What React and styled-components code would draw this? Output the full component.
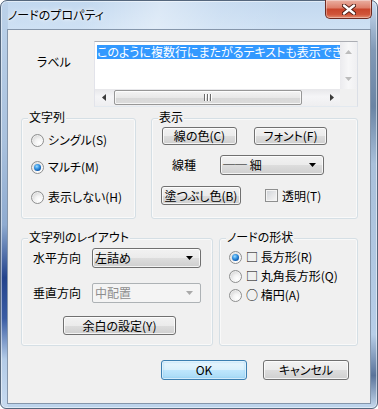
import React from 'react';
import styled, { createGlobalStyle, css } from 'styled-components';

const F = `"Noto Sans CJK JP", "Noto Sans", sans-serif`;

const GlobalStyle = createGlobalStyle`
  html, body { margin: 0; padding: 0; background: #ffffff; }
  body { font-family: ${F}; font-size: 12px; color: #000; }
  * { box-sizing: border-box; }
`;

const Window = styled.div`
  width: 378px;
  height: 409px;
  display: flex;
  flex-direction: column;
  padding: 0 6px 4px;
  border: 1px solid #55677d;
  border-radius: 7px 7px 6px 6px;
  box-shadow: inset 0 0 0 1px rgba(255, 255, 255, 0.5);
  font-feature-settings: "palt";
  background:
    linear-gradient(105deg, rgba(255,255,255,0) 22%, rgba(255,255,255,0.38) 42%, rgba(255,255,255,0.12) 58%, rgba(255,255,255,0) 75%) 0 0 / 100% 29px no-repeat,
    linear-gradient(180deg, #bcd2ea 0%, #a9c1dd 35%, #8fabd0 55%, #23438c 68%, #3a5ca3 78%, #b3cbe7 88%, #c8dbf0 100%) 0 0 / 7px 100% no-repeat,
    linear-gradient(180deg, #c9dcf1 0%, #8199b6 12%, #6a84a4 26%, #a9c0da 40%, #b7cee8 82%, #5a739a 92%, #c7daef 100%) 100% 0 / 7px 100% no-repeat,
    linear-gradient(180deg, #c2d8ef 0%, #cfe1f4 7%, #bdd4ec 100%);
`;

const TitleBar = styled.div`
  height: 28px;
  margin: 0 -6px;
  padding: 0 5px 0 7px;
  display: flex;
  align-items: flex-start;
  justify-content: space-between;
  flex: none;
`;

const Title = styled.span`
  margin-top: 7px;
  line-height: 14px;
  font-size: 12px;
  color: #000;
  text-shadow: 0 0 6px rgba(255, 255, 255, 0.9), 0 0 3px rgba(255, 255, 255, 0.9);
`;

const CloseButton = styled.div`
  width: 47px;
  height: 19px;
  margin-top: -1px;
  border: 1px solid #6e2b22;
  border-top: none;
  border-radius: 0 0 5px 5px;
  background: linear-gradient(#eab0a2 0%, #de806b 42%, #c9462c 52%, #d0553a 80%, #e38c70 100%);
  box-shadow: inset 0 0 0 1px rgba(255, 255, 255, 0.35);
  display: flex;
  align-items: center;
  justify-content: center;
`;

const Client = styled.div`
  flex: 1;
  border: 1px solid #8596ab;
  background: #f0f0f0;
  display: flex;
  flex-direction: column;
`;

const LabelRow = styled.div`
  display: flex;
  align-items: flex-start;
  margin-top: 11px;
  padding-left: 29px;
`;

const FieldName = styled.span`
  width: ${p => p.$w}px;
  flex: none;
  line-height: 14px;
  margin-top: ${p => p.$mt || 0}px;
`;

const TextBox = styled.div`
  width: 264px;
  height: 66px;
  border: 1px solid;
  border-color: #abadb3 #dbdfe6 #e3e9ef #e2e3ea;
  background: #fff;
  display: grid;
  grid-template-columns: 1fr 17px;
  grid-template-rows: 1fr 17px;
`;

const TextContent = styled.div`
  grid-column: 1;
  grid-row: 1;
  overflow: hidden;
  white-space: nowrap;
  padding: 1px 0 0 2px;
`;

const Selected = styled.span`
  display: inline-block;
  background: #3399ff;
  color: #fff;
  line-height: 14px;
`;

const VScroll = styled.div`
  grid-column: 2;
  grid-row: 1;
  display: flex;
  flex-direction: column;
  justify-content: space-between;
  align-items: center;
  padding: 8px 0;
  background: linear-gradient(90deg, #ebebee, #f7f7f8 50%, #efeff1);
`;

const HScroll = styled.div`
  grid-column: 1;
  grid-row: 2;
  display: flex;
  align-items: center;
  background: linear-gradient(#e7e7ea, #f5f5f7 45%, #eeeef0);
`;

const ArrowCell = styled.div`
  width: 17px;
  height: 17px;
  flex: none;
  display: flex;
  align-items: center;
  justify-content: center;
`;

const Thumb = styled.div`
  width: 188px;
  height: 15px;
  margin-left: 2px;
  border: 1px solid #979797;
  border-radius: 2px;
  background: linear-gradient(#f4f4f4 0%, #e8e8e8 50%, #d8d8d8 51%, #dcdcdc 100%);
  box-shadow: inset 0 0 0 1px rgba(255, 255, 255, 0.7);
  display: flex;
  align-items: center;
  justify-content: center;
  gap: 1px;
`;

const Grip = styled.span`
  width: 1px;
  height: 7px;
  background: #6b6b6b;
  box-shadow: 1px 0 0 #ffffff;
  margin-right: 1px;
`;

const Spacer = styled.div`
  flex: 1;
`;

const Corner = styled.div`
  grid-column: 2;
  grid-row: 2;
  background: #f0f0f0;
`;

const GroupRow = styled.div`
  display: flex;
  align-items: stretch;
  margin-top: ${p => p.$mt}px;
  padding-left: 13px;
  gap: ${p => p.$gap}px;
  height: ${p => p.$h}px;
  flex: none;
`;

const Group = styled.div`
  position: relative;
  width: ${p => p.$w}px;
  flex: none;
  border: 1px solid #d5dfe5;
  border-radius: 3px;
  box-shadow: inset 0 0 0 1px rgba(255, 255, 255, 0.6);
  padding: ${p => p.$pad};
  display: flex;
  flex-direction: column;
  align-items: flex-start;
`;

const Legend = styled.span`
  position: absolute;
  top: -9px;
  left: 6px;
  padding: 0 1px;
  background: #f0f0f0;
  line-height: 14px;
  white-space: nowrap;
`;

const RadioItem = styled.label`
  display: flex;
  align-items: center;
  gap: 4px;
  height: 14px;
  line-height: 14px;
  margin-top: ${p => p.$mt || 0}px;
  white-space: nowrap;
`;

const RadioCircle = styled.span`
  position: relative;
  width: 13px;
  height: 13px;
  flex: none;
  border-radius: 50%;
  border: 1px solid #8e8f8f;
  background: radial-gradient(circle at 65% 70%, #ffffff 0%, #f4f4f4 35%, #d8d8d8 75%, #cbcbcb 100%);
  box-shadow: inset 0 0 0 1px rgba(255, 255, 255, 0.5);
  ${p => p.$checked && css`
    &::after {
      content: '';
      position: absolute;
      left: 2px;
      top: 2px;
      width: 7px;
      height: 7px;
      border-radius: 50%;
      background: radial-gradient(circle at 40% 35%, #9fdcff 0%, #3d9be6 35%, #0f5cb0 70%, #0b3d7e 100%);
    }
  `}
`;

const CheckItem = styled.label`
  display: flex;
  align-items: center;
  gap: 4px;
  line-height: 14px;
  white-space: nowrap;
`;

const CheckBoxBox = styled.span`
  width: 13px;
  height: 13px;
  flex: none;
  border: 1px solid #8e8f8f;
  background: linear-gradient(135deg, #cdd1d6 0%, #e4e5e7 50%, #f7f7f7 100%);
  box-shadow: inset 0 0 0 1px #f4f4f4;
`;

const ButtonLine = styled.div`
  display: flex;
  align-items: center;
  gap: ${p => p.$gap || 0}px;
  margin-top: ${p => p.$mt || 0}px;
  margin-left: ${p => p.$ml || 0}px;
`;

const FieldRow = styled.div`
  display: flex;
  align-items: center;
  margin-top: ${p => p.$mt || 0}px;
  margin-left: ${p => p.$ml || 0}px;
`;

const RadioList = styled.div`
  display: flex;
  flex-direction: column;
  align-items: flex-start;
`;

const PushButton = styled.button`
  width: ${p => p.$w}px;
  height: ${p => p.$h || 19}px;
  flex: none;
  margin: 0;
  margin-top: ${p => p.$mt || 0}px;
  margin-left: ${p => p.$ml || 0}px;
  padding: 0;
  font-family: ${F};
  font-size: 12px;
  font-feature-settings: "palt";
  line-height: 14px;
  color: #000;
  white-space: nowrap;
  border: 1px solid #707070;
  border-radius: 3px;
  background: linear-gradient(#f2f2f2 0%, #ebebeb 50%, #dddddd 51%, #cfcfcf 100%);
  box-shadow: inset 0 0 0 1px rgba(255, 255, 255, 0.75);
  ${p => p.$default && css`
    border-color: #3c7fb1;
    background: linear-gradient(#eaf6fd 0%, #d9f0fc 50%, #bee6fd 51%, #a7d9f5 100%);
    box-shadow: inset 0 0 0 1px rgba(255, 255, 255, 0.6), inset 0 0 2px 1px rgba(110, 190, 240, 0.6);
  `}
`;

const Combo = styled.div`
  width: ${p => p.$w}px;
  height: 20px;
  flex: none;
  display: flex;
  align-items: center;
  justify-content: space-between;
  padding: 0 7px 0 2px;
  line-height: 14px;
  border: 1px solid #707070;
  border-radius: 3px;
  background: linear-gradient(#f2f2f2 0%, #ebebeb 50%, #dddddd 51%, #cfcfcf 100%);
  box-shadow: inset 0 0 0 1px rgba(255, 255, 255, 0.75);
  color: #000;
  ${p => p.$disabled && css`
    border-color: #adb2b5;
    border-radius: 2px;
    background: #f4f4f4;
    box-shadow: none;
    color: #8d8d8d;
  `}
`;

const ComboArrow = ({ color }) => (
  <svg width="7" height="4" viewBox="0 0 7 4"><polygon points="0,0 7,0 3.5,4" fill={color} /></svg>
);

const ButtonRow = styled.div`
  display: flex;
  justify-content: flex-end;
  gap: 16px;
  margin-top: 14px;
  padding-right: 21px;
`;

const Tri = ({ dir, color }) => {
  const pts = {
    up: '0,4 7,4 3.5,0',
    down: '0,0 7,0 3.5,4',
    left: '4,0 4,7 0,3.5',
    right: '0,0 0,7 4,3.5',
  }[dir];
  const vert = dir === 'up' || dir === 'down';
  return (
    <svg width={vert ? 7 : 4} height={vert ? 4 : 7} viewBox={vert ? '0 0 7 4' : '0 0 4 7'}>
      <polygon points={pts} fill={color} />
    </svg>
  );
};

export default function App() {
  return (
    <>
      <GlobalStyle />
      <Window>
        <TitleBar>
          <Title>ノードのプロパティ</Title>
          <CloseButton>
            <svg width="14" height="11" viewBox="0 0 14 11">
              <path d="M2 1.5 L12 9.5 M12 1.5 L2 9.5" stroke="#4a1a12" strokeWidth="4.2" strokeLinecap="round" />
              <path d="M2 1.5 L12 9.5 M12 1.5 L2 9.5" stroke="#ffffff" strokeWidth="2.4" strokeLinecap="round" />
            </svg>
          </CloseButton>
        </TitleBar>
        <Client>
          <LabelRow>
            <FieldName $w={57} $mt={14}>ラベル</FieldName>
            <TextBox>
              <TextContent>
                <Selected>このように複数行にまたがるテキストも表示できます。</Selected>
              </TextContent>
              <VScroll>
                <Tri dir="up" color="#bcbcbc" />
                <Tri dir="down" color="#bcbcbc" />
              </VScroll>
              <HScroll>
                <ArrowCell><Tri dir="left" color="#3c3c3c" /></ArrowCell>
                <Thumb><Grip /><Grip /><Grip /></Thumb>
                <Spacer />
                <ArrowCell><Tri dir="right" color="#3c3c3c" /></ArrowCell>
              </HScroll>
              <Corner />
            </TextBox>
          </LabelRow>

          <GroupRow $mt={11} $gap={15} $h={101}>
            <Group $w={115} $pad="14px 0 0 9px">
              <Legend>文字列</Legend>
              <RadioList>
                <RadioItem><RadioCircle />シングル(S)</RadioItem>
                <RadioItem $mt={13}><RadioCircle $checked />マルチ(M)</RadioItem>
                <RadioItem $mt={16}><RadioCircle />表示しない(H)</RadioItem>
              </RadioList>
            </Group>
            <Group $w={207} $pad="0">
              <Legend>表示</Legend>
              <ButtonLine $mt={8} $ml={10} $gap={17}>
                <PushButton $w={75} $h={18}>線の色(C)</PushButton>
                <PushButton $w={73} $h={18}>フォント(F)</PushButton>
              </ButtonLine>
              <FieldRow $mt={10} $ml={20}>
                <FieldName $w={48}>線種</FieldName>
                <Combo $w={104}>
                  <span>── 細</span>
                  <ComboArrow color="#000" />
                </Combo>
              </FieldRow>
              <ButtonLine $mt={11} $ml={9} $gap={24}>
                <PushButton $w={80} $h={19}>塗つぶし色(B)</PushButton>
                <CheckItem><CheckBoxBox />透明(T)</CheckItem>
              </ButtonLine>
            </Group>
          </GroupRow>

          <GroupRow $mt={19} $gap={6} $h={108}>
            <Group $w={192} $pad="0">
              <Legend>文字列のレイアウト</Legend>
              <FieldRow $mt={9} $ml={11}>
                <FieldName $w={59}>水平方向</FieldName>
                <Combo $w={109}>
                  <span>左詰め</span>
                  <ComboArrow color="#000" />
                </Combo>
              </FieldRow>
              <FieldRow $mt={15} $ml={11}>
                <FieldName $w={59}>垂直方向</FieldName>
                <Combo $w={109} $disabled>
                  <span>中配置</span>
                  <ComboArrow color="#a9a9a9" />
                </Combo>
              </FieldRow>
              <PushButton $w={113} $h={19} $mt={13} $ml={41}>余白の設定(Y)</PushButton>
            </Group>
            <Group $w={139} $pad="11px 0 0 9px">
              <Legend>ノードの形状</Legend>
              <RadioList>
                <RadioItem><RadioCircle $checked />□ 長方形(R)</RadioItem>
                <RadioItem $mt={5}><RadioCircle />□ 丸角長方形(Q)</RadioItem>
                <RadioItem $mt={5}><RadioCircle />○ 楕円(A)</RadioItem>
              </RadioList>
            </Group>
          </GroupRow>

          <ButtonRow>
            <PushButton $w={86} $h={20} $default>OK</PushButton>
            <PushButton $w={86} $h={20}>キャンセル</PushButton>
          </ButtonRow>
        </Client>
      </Window>
    </>
  );
}
